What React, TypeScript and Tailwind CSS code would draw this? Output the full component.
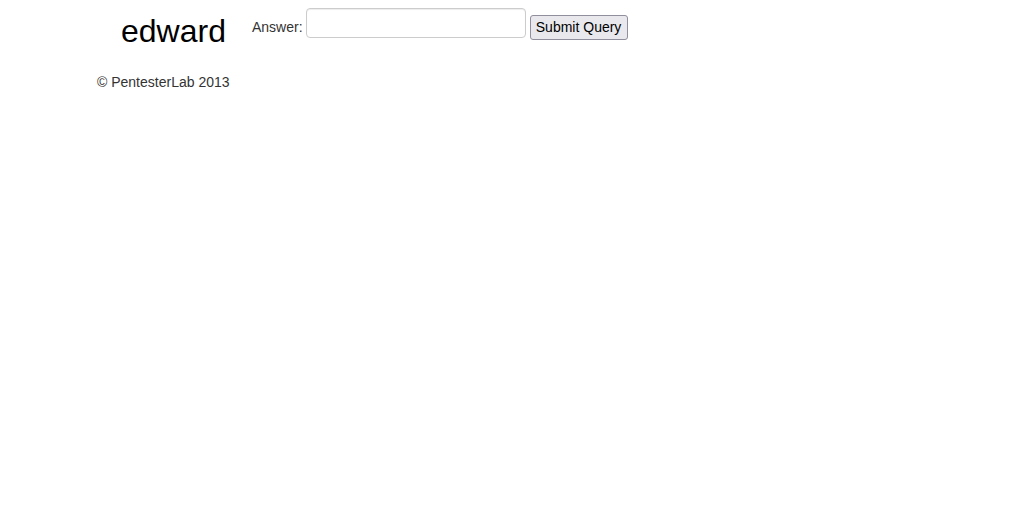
export default function App() {
  return (
    <div className="min-h-screen bg-white font-['Liberation_Sans',Arial,sans-serif] text-[14px] leading-5 text-[#333]">
      <div className="flex items-start">
        <h2 className="ml-[121px] mt-[11px] h-10 w-[104px] text-[32px] leading-10 font-normal text-black">
          edward
        </h2>
        <form className="ml-[27px] flex items-start" onSubmit={(e) => e.preventDefault()}>
          <label className="mt-[17px]">Answer:</label>
          <input
            type="text"
            className="ml-[3px] mt-[8px] h-[30px] w-[220px] rounded-[4px] border border-[#ccc] px-[6px] py-1 text-[14px] text-[#555] shadow-[inset_0_1px_1px_rgba(0,0,0,0.075)] outline-none"
          />
          <button
            type="submit"
            className="ml-[4px] mt-[15px] h-[25px] w-[98px] rounded-[3px] border border-[#8f8f9d] bg-[#e9e9ed] pb-[2px] text-[14px] leading-5 text-black"
          >
            Submit Query
          </button>
        </form>
      </div>
      <footer className="mt-[21px] pl-[97px]">
        <p>© PentesterLab 2013</p>
      </footer>
    </div>
  );
}
